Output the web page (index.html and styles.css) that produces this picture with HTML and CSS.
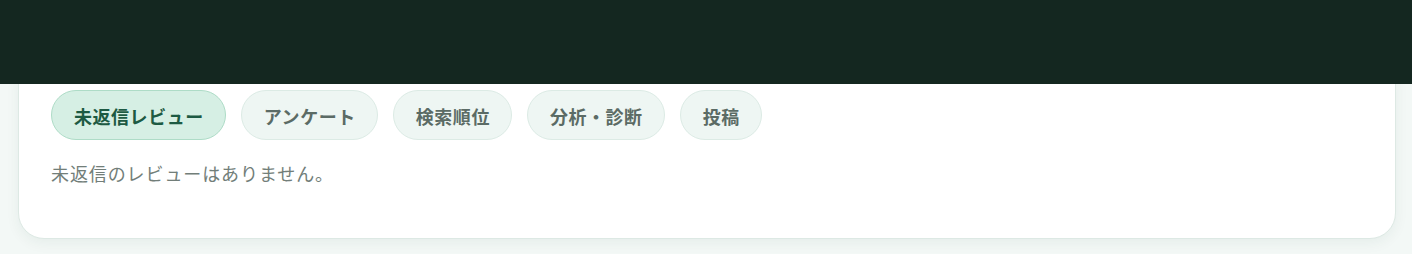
FILE: index.html
```html
<!DOCTYPE html>
<html lang="ja">
<head>
<meta charset="utf-8">
<title>レビュー</title>
<meta name=viewport content="width=device-width, initial-scale=1">
<link rel="stylesheet" href="styles.css">
</head>
<body>
<div class="topbar"></div>
<div class="page">
  <div class="card">
    <div class="tabs">
      <button class="tab active">未返信レビュー</button>
      <button class="tab">アンケート</button>
      <button class="tab">検索順位</button>
      <button class="tab">分析・診断</button>
      <button class="tab">投稿</button>
    </div>
    <p class="empty">未返信のレビューはありません。</p>
  </div>
</div>
</body>
</html>
```

FILE: styles.css
```css
body {
    margin: 0;
    background-color: #f3f8f6;
    font-family: "Noto Sans CJK JP", "Noto Sans", sans-serif;
    height: 254px;
    overflow: hidden;
}
.topbar {
    position: fixed;
    top: 0;
    left: 0;
    right: 0;
    height: 84px;
    background-color: #142720;
    z-index: 10;
}
.page {
    padding: 57px 16px 0 18px;
}
.card {
    background-color: #fff;
    border: 1px solid #dde9e4;
    border-radius: 26px;
    padding: 32px 32px 51px 32px;
    box-shadow: 0 4px 14px rgba(20, 60, 45, 0.06);
}
.tabs {
    display: flex;
    gap: 15px;
}
.tab {
    font-family: inherit;
    font-size: 18px;
    font-weight: bold;
    letter-spacing: 0.03em;
    line-height: 26px;
    height: 50px;
    padding: 2px 21px 0 22px;
    border-radius: 25px;
    border: 1px solid #dcebe5;
    background-color: #eef6f3;
    color: #5b6b65;
    cursor: pointer;
}
.tab.active {
    background-color: #d6efe4;
    border-color: #aedcc7;
    color: #1d5a43;
}
.empty {
    margin: 20px 0 0 0;
    font-size: 18px;
    line-height: 27px;
    letter-spacing: 0.05em;
    color: #727e79;
}
```
